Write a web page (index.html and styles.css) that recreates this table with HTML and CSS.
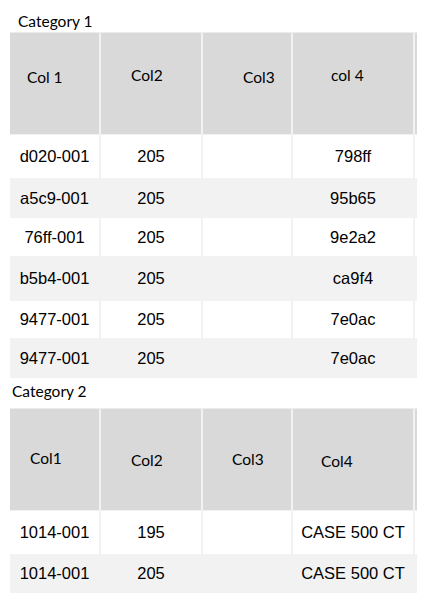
FILE: index.html
```html
<!DOCTYPE html>
<html lang="en">
<head>
<meta charset="utf-8">
<title>Categories</title>
<link rel="stylesheet" href="styles.css">
</head>
<body>
<main class="page">
  <h2 class="cat-label cat-label--one">Category 1</h2>
  <table class="grid grid--one">
    <thead>
      <tr class="head-row">
        <th class="c1 h1-c1">Col 1</th>
        <th class="c2 h1-c2">Col2</th>
        <th class="c3 h1-c3">Col3</th>
        <th class="c4 h1-c4">col 4</th>
        <th class="c5"></th>
      </tr>
    </thead>
    <tbody>
      <tr class="row h44"><td class="c1">d020-001</td><td class="c2">205</td><td class="c3"></td><td class="c4">798ff</td><td class="c5"></td></tr>
      <tr class="row row--alt h40"><td class="c1">a5c9-001</td><td class="c2">205</td><td class="c3"></td><td class="c4">95b65</td><td class="c5"></td></tr>
      <tr class="row h38"><td class="c1">76ff-001</td><td class="c2">205</td><td class="c3"></td><td class="c4">9e2a2</td><td class="c5"></td></tr>
      <tr class="row row--alt h45"><td class="c1">b5b4-001</td><td class="c2">205</td><td class="c3"></td><td class="c4">ca9f4</td><td class="c5"></td></tr>
      <tr class="row h37"><td class="c1">9477-001</td><td class="c2">205</td><td class="c3"></td><td class="c4">7e0ac</td><td class="c5"></td></tr>
      <tr class="row row--alt h40"><td class="c1">9477-001</td><td class="c2">205</td><td class="c3"></td><td class="c4">7e0ac</td><td class="c5"></td></tr>
    </tbody>
  </table>

  <h2 class="cat-label cat-label--two">Category 2</h2>
  <table class="grid grid--two">
    <thead>
      <tr class="head-row">
        <th class="c1 h2-c1">Col1</th>
        <th class="c2 h2-c2">Col2</th>
        <th class="c3 h2-c3">Col3</th>
        <th class="c4 h2-c4">Col4</th>
        <th class="c5"></th>
      </tr>
    </thead>
    <tbody>
      <tr class="row h44"><td class="c1">1014-001</td><td class="c2">195</td><td class="c3"></td><td class="c4">CASE 500 CT</td><td class="c5"></td></tr>
      <tr class="row row--alt h39"><td class="c1">1014-001</td><td class="c2">205</td><td class="c3"></td><td class="c4">CASE 500 CT</td><td class="c5"></td></tr>
    </tbody>
  </table>
</main>
</body>
</html>
```

FILE: styles.css
```css
html, body {
  margin: 0;
  padding: 0;
  background: #ffffff;
}

.page {
  padding-left: 10px;
  color: #000000;
}

.cat-label {
  margin: 0;
  font-family: Lato, "Open Sans", sans-serif;
  font-weight: 400;
  font-size: 15.5px;
  line-height: 16px;
}

.cat-label--one {
  padding: 13px 0 3px 8px;
}

.cat-label--two {
  padding: 5px 0 9px 2px;
}

.grid {
  table-layout: fixed;
  width: 407px;
  border-collapse: separate;
  border-spacing: 0;
  border-top: 1px solid #ececec;
}

.grid th,
.grid td {
  box-sizing: border-box;
  padding: 0;
}

.grid .c1 { width: 89px; }
.grid .c2 { width: 102px; border-left: 2px solid #f2f2f2; }
.grid .c3 { width: 90px; border-left: 2px solid #f2f2f2; }
.grid .c4 { width: 122px; border-left: 2px solid #f2f2f2; }
.grid .c5 { width: 4px; border-left: 2px solid #f2f2f2; }

.head-row {
  height: 101px;
  background: #d9d9d9;
}

.head-row th {
  font-family: Lato, "Open Sans", sans-serif;
  font-weight: 400;
  font-size: 15.5px;
  text-align: left;
  vertical-align: middle;
}

.grid .h1-c1 { padding: 0 0 13px 17px; }
.grid .h1-c2 { padding: 0 0 17px 30px; }
.grid .h1-c3 { padding: 0 0 14px 40px; }
.grid .h1-c4 { padding: 0 0 18px 38px; }

.grid .h2-c1 { padding: 0 0 3px 20px; }
.grid .h2-c2 { padding: 0 0 0 30px; }
.grid .h2-c3 { padding: 0 0 2px 29px; }
.grid .h2-c4 { padding: 3px 0 0 28px; }

.row td {
  font-family: "Liberation Sans", Arial, sans-serif;
  font-size: 16.5px;
  text-align: center;
  vertical-align: middle;
  background: #ffffff;
}

.row--alt td {
  background: #f2f2f2;
}

tbody .row:first-child td {
  border-top: 1px solid #f2f2f2;
}

.h37 { height: 37px; }
.h38 { height: 38px; }
.h39 { height: 39px; }
.h40 { height: 40px; }
.h44 { height: 44px; }
.h45 { height: 45px; }
```
